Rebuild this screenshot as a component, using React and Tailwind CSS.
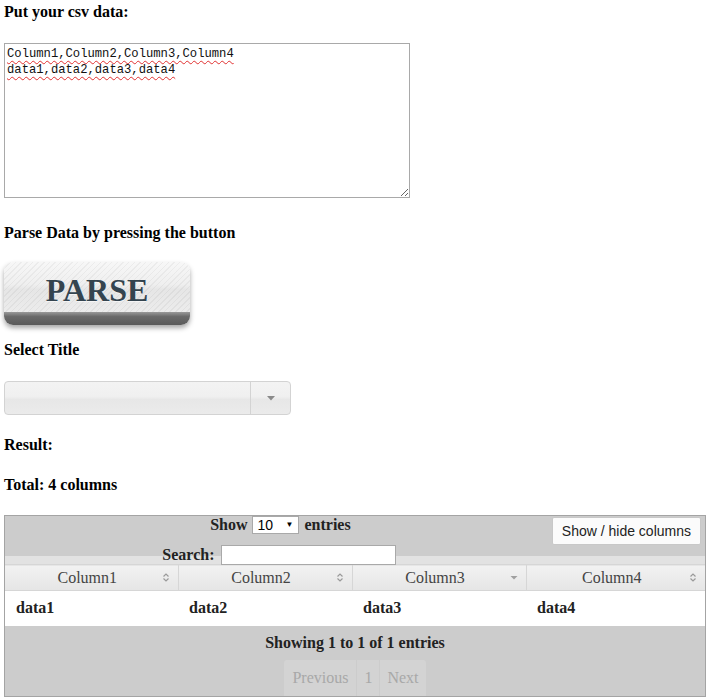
import { useState } from "react";

const columns = ["Column1", "Column2", "Column3", "Column4"];
const rows = [["data1", "data2", "data3", "data4"]];

function SortBoth() {
  return (
    <svg width="8" height="11" viewBox="0 0 8 11" className="shrink-0">
      <path d="M1.5 4.5 L4 2 L6.5 4.5" fill="none" stroke="#9a9a9a" strokeWidth="1.2" />
      <path d="M1.5 6.5 L4 9 L6.5 6.5" fill="none" stroke="#9a9a9a" strokeWidth="1.2" />
    </svg>
  );
}

function SortDesc() {
  return (
    <svg width="8" height="11" viewBox="0 0 8 11" className="shrink-0">
      <path d="M0.5 4 L7.5 4 L4 7.5 Z" fill="#a0a0a0" />
    </svg>
  );
}

export default function App() {
  const [csv, setCsv] = useState("Column1,Column2,Column3,Column4\ndata1,data2,data3,data4");

  return (
    <div className="px-[4px] font-['Liberation_Serif',serif] text-black bg-white min-h-[699px]">
      <h4 className="mt-[3px] text-[16px] leading-[18px] font-bold">Put your csv data:</h4>

      {/* CSV INPUT */}
      <textarea
        value={csv}
        onChange={(e) => setCsv(e.target.value)}
        className="block mt-[22px] w-[406px] h-[155px] border border-[#a9a9a9] px-[2px] py-[2px] font-['Liberation_Mono',monospace] text-[12.2px] leading-[16px] text-[#111] outline-none underline decoration-wavy decoration-[#e03030] decoration-[1px] underline-offset-[3px]"
      />

      <h4 className="mt-[26px] text-[16px] leading-[18px] font-bold">Parse Data by pressing the button</h4>

      {/* PARSE BUTTON */}
      <button className="block mt-[20px] w-[186px] rounded-[9px] overflow-hidden shadow-[0_3px_5px_rgba(0,0,0,0.35)]">
        <div className="h-[50px] flex items-center justify-center [background-image:repeating-linear-gradient(135deg,rgba(0,0,0,0.045)_0px,rgba(0,0,0,0.045)_1px,transparent_1px,transparent_4px),linear-gradient(to_bottom,#f7f7f7_0%,#efefef_45%,#e6e6e6_55%,#ececec_100%)]">
          <span className="font-['Liberation_Serif',serif] font-bold text-[32px] leading-none text-[#34444f] mt-[5px] [text-shadow:0_1px_0_rgba(255,255,255,0.6)]">
            PARSE
          </span>
        </div>
        <div className="h-[13px] [background-image:linear-gradient(to_bottom,#9a9a9a_0%,#6a6a6a_35%,#5a5a5a_100%)]" />
      </button>

      <h4 className="mt-[16px] text-[16px] leading-[18px] font-bold">Select Title</h4>

      {/* SELECT TITLE */}
      <div className="mt-[22px] w-[287px] h-[34px] flex rounded-[4px] border border-[#d3d3d3] overflow-hidden [background-image:linear-gradient(to_bottom,#f3f3f3_0%,#f0f0f0_45%,#e7e7e7_55%,#ebebeb_100%)]">
        <div className="flex-1" />
        <div className="w-[40px] border-l border-[#d3d3d3] flex items-center justify-center">
          <svg width="8" height="5" viewBox="0 0 8 5">
            <path d="M0 0 L8 0 L4 4.5 Z" fill="#8a8a8a" />
          </svg>
        </div>
      </div>

      <h4 className="mt-[21px] text-[16px] leading-[18px] font-bold">Result:</h4>
      <h4 className="mt-[22px] text-[16px] leading-[18px] font-bold">Total: 4 columns</h4>

      {/* RESULT TABLE */}
      <div className="mt-[21px] w-[702px] border border-[#a4a4a4] bg-[#cccccc]">
        <div className="h-[48px] flex [background-image:linear-gradient(to_bottom,#cccccc_40px,#e2e2e2_40px)]">
          <div className="flex-1 flex flex-col items-center pl-[4px]">
            <div className="flex items-center h-[18px] gap-[5px] font-bold text-[16px] text-[#222]">
              <span>Show</span>
              <span className="w-[47px] h-[18px] bg-white border border-[#a9a9a9] flex items-center justify-between pl-[4px] pr-[5px] font-['Liberation_Sans',sans-serif] font-normal text-[14px] text-black">
                10
                <span className="text-[8px]">▼</span>
              </span>
              <span>entries</span>
            </div>
            <div className="mt-[9px] flex items-center gap-[7px] pr-[2px]">
              <span className="font-bold text-[16px] text-[#222]">Search:</span>
              <input className="w-[175px] h-[20px] bg-white border border-[#a9a9a9] outline-none" />
            </div>
          </div>
          <button className="mt-[1px] mr-[4px] h-[28px] px-[9px] bg-[#fbfbfb] border border-[#c8c8c8] rounded-[2px] font-['Liberation_Sans',sans-serif] text-[14px] text-[#222]">
            Show / hide columns
          </button>
        </div>

        <table className="w-full table-fixed border-collapse bg-white">
          <colgroup>
            <col className="w-[173px]" />
            <col className="w-[174px]" />
            <col className="w-[174px]" />
            <col />
          </colgroup>
          <thead>
            <tr className="h-[26px] border-t border-b border-[#d6d6d6] [background-image:linear-gradient(to_bottom,#f2f2f2,#e6e6e6)]">
              {columns.map((c, i) => (
                <th key={c} className={`p-0 font-normal text-[16px] leading-[18px] text-[#444] ${i > 0 ? "border-l border-[#d6d6d6]" : ""}`}>
                  <div className="flex items-center px-[8px]">
                    <span className="flex-1 text-center">{c}</span>
                    {c === "Column3" ? <SortDesc /> : <SortBoth />}
                  </div>
                </th>
              ))}
            </tr>
          </thead>
          <tbody>
            {rows.map((r, ri) => (
              <tr key={ri} className="h-[35px]">
                {r.map((d) => (
                  <td key={d} className="p-0 pl-[11px] font-bold text-[16px] leading-[18px] text-[#222]">{d}</td>
                ))}
              </tr>
            ))}
          </tbody>
        </table>

        {/* FOOTER */}
        <div className="flex flex-col items-center pt-[8px]">
          <div className="font-bold text-[16px] leading-[18px] text-[#222]">Showing 1 to 1 of 1 entries</div>
          <div className="mt-[8px] flex h-[36px] rounded-t-[3px] overflow-hidden text-[16px] text-[#a8a8a8]">
            <span className="px-[8px] flex items-center bg-[#d3d3d3]">Previous</span>
            <span className="ml-[1px] px-[7px] flex items-center bg-[#d3d3d3]">1</span>
            <span className="ml-[1px] px-[7px] flex items-center bg-[#d3d3d3]">Next</span>
          </div>
        </div>
      </div>
    </div>
  );
}
